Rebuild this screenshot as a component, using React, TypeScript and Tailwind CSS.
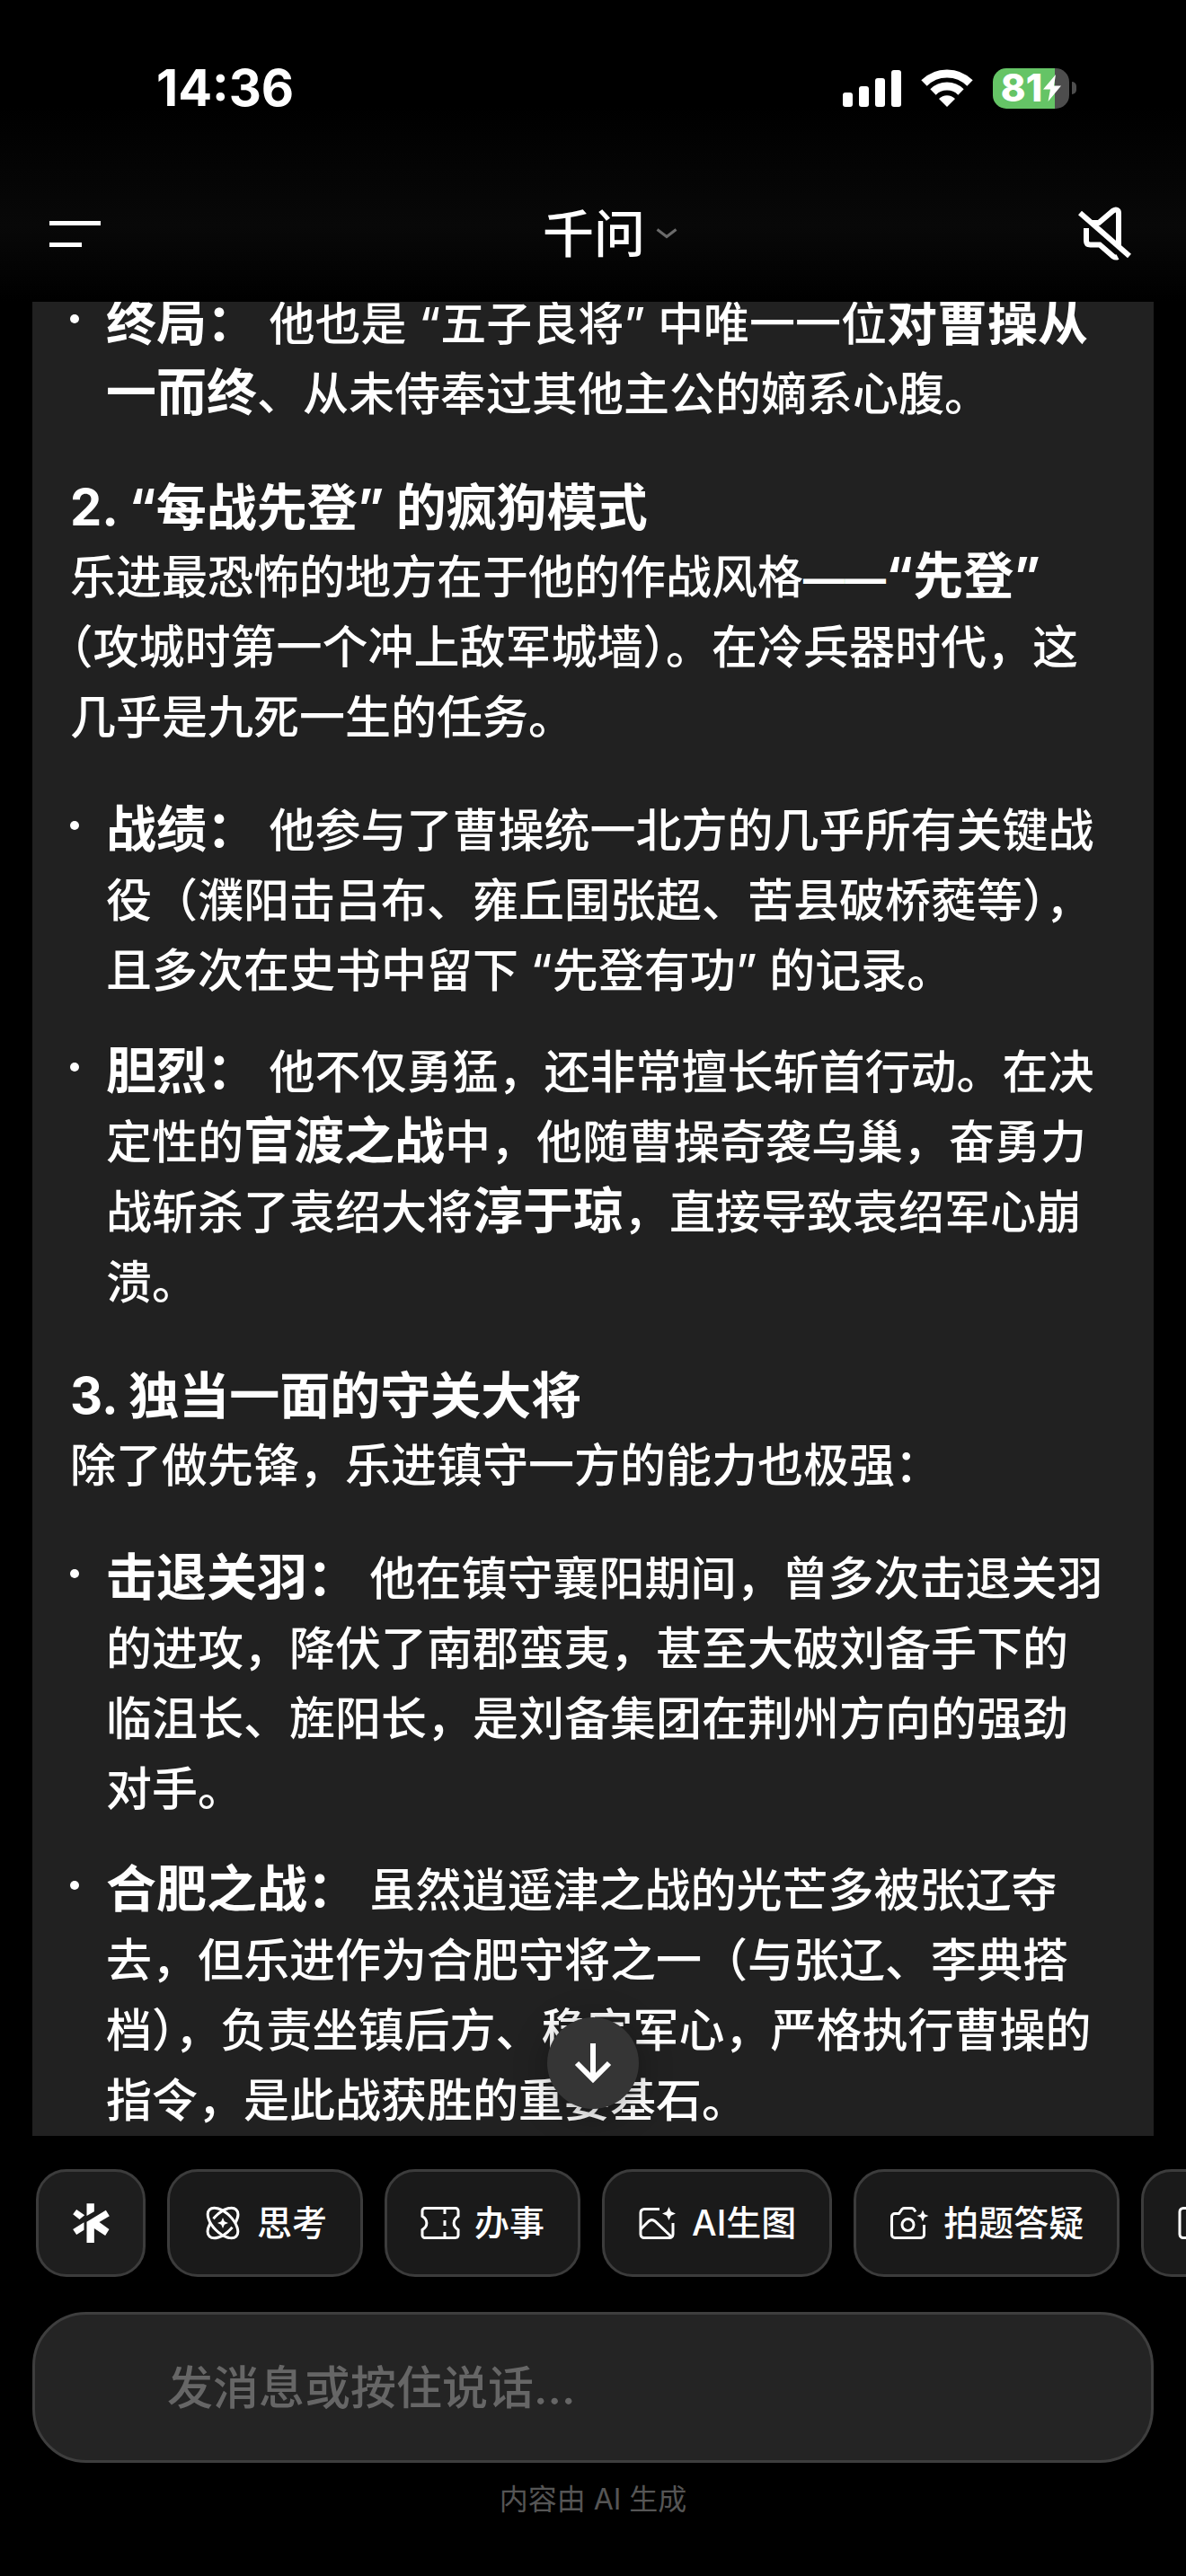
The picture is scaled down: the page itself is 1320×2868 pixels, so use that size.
import type { ReactNode } from 'react';

interface Tool {
  label: string;
  icon: ReactNode;
}

// 快捷工具图标
const ThinkIcon = () => (
  <svg className="size-11" viewBox="0 0 44 44" fill="none" stroke="currentColor" strokeWidth="3">
    <ellipse cx="22" cy="22" rx="11" ry="21" transform="rotate(-45 22 22)" />
    <ellipse
      cx="22"
      cy="22"
      rx="11"
      ry="21"
      transform="rotate(45 22 22)"
      pathLength={100}
      strokeDasharray="44 6"
      strokeDashoffset="4"
    />
    <path d="M22 16l1.800 4.200L28 22l-4.200 1.800L22 28l-1.800-4.200L16 22l4.200-1.800z" fill="currentColor" stroke="none" />
  </svg>
);

const TicketIcon = () => (
  <svg className="size-11" viewBox="0 0 44 44" fill="none" stroke="currentColor" strokeWidth="3">
    <path d="M5 5.500h34a3 3 0 0 1 3 3v6c-6.500 4-6.500 11 0 15v6a3 3 0 0 1-3 3H5a3 3 0 0 1-3-3v-6c6.500-4 6.500-11 0-15v-6a3 3 0 0 1 3-3z" />
    <path d="M27 5v7M27 19v6M27 32v7" />
  </svg>
);

const ImageIcon = () => (
  <svg className="size-11" viewBox="0 0 44 44" fill="none" stroke="currentColor" strokeWidth="3">
    <path d="M24 6.500H7a4 4 0 0 0-4 4v24a4 4 0 0 0 4 4h28a4 4 0 0 0 4-4V22" />
    <path d="M3 29l9-9c2.500-2 4.500-2 7 0l19 18" />
    <path d="M34.500 4l2.300 5.200L42 11.500l-5.200 2.300L34.500 19l-2.300-5.200-5.200-2.300 5.200-2.300z" fill="currentColor" stroke="none" />
  </svg>
);

const CameraIcon = () => (
  <svg className="size-11" viewBox="0 0 44 44" fill="none" stroke="currentColor" strokeWidth="3">
    <path d="M29 9.500l-2-3a3 3 0 0 0-2-1h-8a4 4 0 0 0-3 1l-3.500 5H6a3.500 3.500 0 0 0-3.500 3.500v20A3.500 3.500 0 0 0 6 38.500h29a3.500 3.500 0 0 0 3.500-3.500V24" />
    <circle cx="20.500" cy="24" r="6.500" />
    <path d="M37 7.500l2 4.700 4.500 1.800-4.500 1.800-2 4.700-2-4.700-4.500-1.800 4.500-1.800z" fill="currentColor" stroke="none" />
  </svg>
);

const FrameIcon = () => (
  <svg className="size-11" viewBox="0 0 44 44" fill="none" stroke="currentColor" strokeWidth="3">
    <rect x="3" y="5.500" width="38" height="33" rx="4" />
  </svg>
);

const tools: Tool[] = [
  { label: '思考', icon: <ThinkIcon /> },
  { label: '办事', icon: <TicketIcon /> },
  { label: 'AI生图', icon: <ImageIcon /> },
  { label: '拍题答疑', icon: <CameraIcon /> },
];

const B = ({ children }: { children: ReactNode }) => (
  <strong className="text-[56px] leading-none font-bold">{children}</strong>
);

const Item = ({ children }: { children: ReactNode }) => (
  <li className="flex">
    <span className="flex h-[66px] w-10 shrink-0 items-center">
      <span className="size-[10px] rounded-full bg-white" />
    </span>
    <p>{children}</p>
  </li>
);

function StatusBar() {
  return (
    <div className="flex h-[196px] items-center justify-between pr-[122px] pl-[174px]">
      <span className="text-[56px] font-bold">14:36</span>
      <div className="flex items-center gap-[22px]">
        <svg width="65" height="42" viewBox="0 0 65 42" fill="currentColor">
          <rect x="0" y="26" width="11" height="16" rx="3" />
          <rect x="18" y="19" width="11" height="23" rx="3" />
          <rect x="36" y="10" width="11" height="32" rx="3" />
          <rect x="54" y="1" width="11" height="41" rx="3" />
        </svg>
        <svg width="58" height="42" viewBox="0 0 58 42" fill="none" stroke="currentColor" strokeWidth="9">
          <path d="M3.500 15.500a36 36 0 0 1 51 0" />
          <path d="M13.500 25.500a22 22 0 0 1 31 0" />
          <path d="M29 42l-9-9a12.500 12.500 0 0 1 18 0z" fill="currentColor" stroke="none" />
        </svg>
        <div className="flex items-center gap-[3px]">
          <div className="flex h-[45px] w-[85px] items-center justify-center gap-px rounded-[15px] bg-[linear-gradient(90deg,#65c466_81%,#4d4d4d_81%)]">
            <span className="text-[42px] leading-none font-extrabold">81</span>
            <svg width="20" height="30" viewBox="0 0 20 30" fill="currentColor" className="shrink-0">
              <path d="M14 0L0 16.500h8L5.500 30 20 12.500h-8z" />
            </svg>
          </div>
          <div className="h-[14px] w-[5px] rounded-r-full bg-[#4d4d4d]" />
        </div>
      </div>
    </div>
  );
}

function Header() {
  return (
    <header className="flex h-[140px] items-center justify-between pr-[60px] pb-3 pl-[55px]">
      <button aria-label="菜单" className="flex w-[67px] flex-col gap-[19px]">
        <span className="h-[5px] w-[57px] bg-white" />
        <span className="h-[5px] w-9 bg-white" />
      </button>
      <button className="relative text-[57px] leading-none font-medium">
        千问
        <svg
          className="absolute top-1/2 left-full ml-3 -translate-y-1/2"
          width="24"
          height="12"
          viewBox="0 0 24 12"
          fill="none"
          stroke="#6b6b6b"
          strokeWidth="3"
        >
          <path d="M1.500 1.500L12 9.500l10.500-8" />
        </svg>
      </button>
      <button aria-label="静音" className="flex w-[60px] justify-end">
        <svg width="60" height="60" viewBox="0 0 60 60" fill="none" stroke="currentColor" strokeWidth="6">
          <path d="M2 7l55 48" />
          <path d="M15 18h8l16-13.500c3-2 6-1 6 2.500V43" />
          <path d="M9 24v14c0 3 1.500 4.500 4.500 4.500H24l15 13c2 1.300 3.500 1.300 5 .5" />
        </svg>
      </button>
    </header>
  );
}

export default function App() {
  return (
    <div
      lang="zh-CN"
      className="flex min-h-screen flex-col overflow-hidden bg-black font-['Inter','Noto_Sans_CJK_SC',sans-serif] text-white"
    >
      <div className="bg-[linear-gradient(180deg,#000_0%,#000_35%,#080808_75%,#000_100%)]">
        <StatusBar />
        <Header />
      </div>

      {/* 回答内容，顶部一行被滚动裁切 */}
      <main className="relative mx-9 flex h-[2042px] flex-col justify-end overflow-hidden bg-[#212121] pr-12 pl-[42px] text-[51px] leading-[78px] font-medium [text-spacing-trim:trim-start]">
        <ul>
          <Item>
            <B>终局：</B> 他也是 “五子良将” 中唯一一位<B>对曹操从一而终</B>、从未侍奉过其他主公的嫡系心腹。
          </Item>
        </ul>
        <h2 className="mt-12 text-[56px] font-bold">2. “每战先登” 的疯狗模式</h2>
        <p>
          乐进最恐怖的地方在于他的作战风格
          <B>
            <span className="text-[46px]">——</span>“先登”
          </B>
          <wbr />
          （攻城时第一个冲上敌军城墙）。在冷兵器时代，这几乎是九死一生的任务。
        </p>
        <ul className="mt-12 flex flex-col gap-[35px]">
          <Item>
            <B>战绩：</B> 他参与了曹操统一北方的几乎所有关键战役（濮阳击吕布、雍丘围张超、苦县破桥蕤等），且多次在史书中留下 “先登有功” 的记录。
          </Item>
          <Item>
            <B>胆烈：</B> 他不仅勇猛，还非常擅长斩首行动。在决定性的<B>官渡之战</B>中，他随曹操奇袭乌巢，奋勇力战斩杀了袁绍大将<B>淳于琼</B>，直接导致袁绍军心崩溃。
          </Item>
        </ul>
        <h2 className="mt-12 text-[56px] font-bold">3. 独当一面的守关大将</h2>
        <p>除了做先锋，乐进镇守一方的能力也极强：</p>
        <ul className="mt-12 flex flex-col gap-[35px]">
          <Item>
            <B>击退关羽：</B> 他在镇守襄阳期间，曾多次击退关羽的进攻，降伏了南郡蛮夷，甚至大破刘备手下的临沮长、旌阳长，是刘备集团在荆州方向的强劲对手。
          </Item>
          <Item>
            <B>合肥之战：</B> 虽然逍遥津之战的光芒多被张辽夺去，但乐进作为合肥守将之一（与张辽、李典搭档），负责坐镇后方、稳定军心，严格执行曹操的指令，是此战获胜的重要基石。
          </Item>
        </ul>
        <button
          aria-label="回到底部"
          className="absolute bottom-[30px] left-1/2 flex size-[102px] -translate-x-1/2 items-center justify-center rounded-full bg-[#353535] shadow-[0_6px_36px_rgba(0,0,0,0.35)]"
        >
          <svg width="44" height="46" viewBox="0 0 44 46" fill="none" stroke="currentColor" strokeWidth="6">
            <path d="M22 1v40M4 23l18 18 18-18" />
          </svg>
        </button>
      </main>

      <nav className="mt-[37px] flex gap-6 overflow-hidden pl-10">
        <button
          aria-label="全部工具"
          className="flex h-[120px] w-[122px] shrink-0 items-center justify-center rounded-[34px] border-3 border-[#3c3c3c] bg-[#1e1e1e]"
        >
          <svg width="41" height="44" viewBox="62 70 122 132" fill="currentColor">
            <path d="M108 71h25v27l-25 14z" />
            <path d="M108 132l64-39 12 20-34 20 33 24-13 21-37-24v48h-25z" />
            <path d="M74 91l27 19-17 14-22-17zM62 157l37-23v25l-25 16z" />
          </svg>
        </button>
        {tools.map((tool) => (
          <button
            key={tool.label}
            className="flex h-[120px] shrink-0 items-center gap-4 rounded-[34px] border-3 border-[#3c3c3c] bg-[#1a1a1a] px-[37px] text-[39px] font-medium"
          >
            {tool.icon}
            {tool.label}
          </button>
        ))}
        <button
          aria-label="更多工具"
          className="flex h-[120px] w-[220px] shrink-0 items-center rounded-[34px] border-3 border-[#3c3c3c] bg-[#1a1a1a] px-[37px]"
        >
          <FrameIcon />
        </button>
      </nav>

      <input
        aria-label="发消息"
        placeholder="发消息或按住说话..."
        className="mx-9 mt-[39px] h-[168px] rounded-[60px] border-3 border-[#3e3e3e] bg-[#242424] px-[147px] text-[51px] font-medium outline-none placeholder:text-[#666]"
      />
      <p className="mt-[17px] text-center text-[32px] leading-[48px] text-[#555]">内容由 AI 生成</p>
    </div>
  );
}
